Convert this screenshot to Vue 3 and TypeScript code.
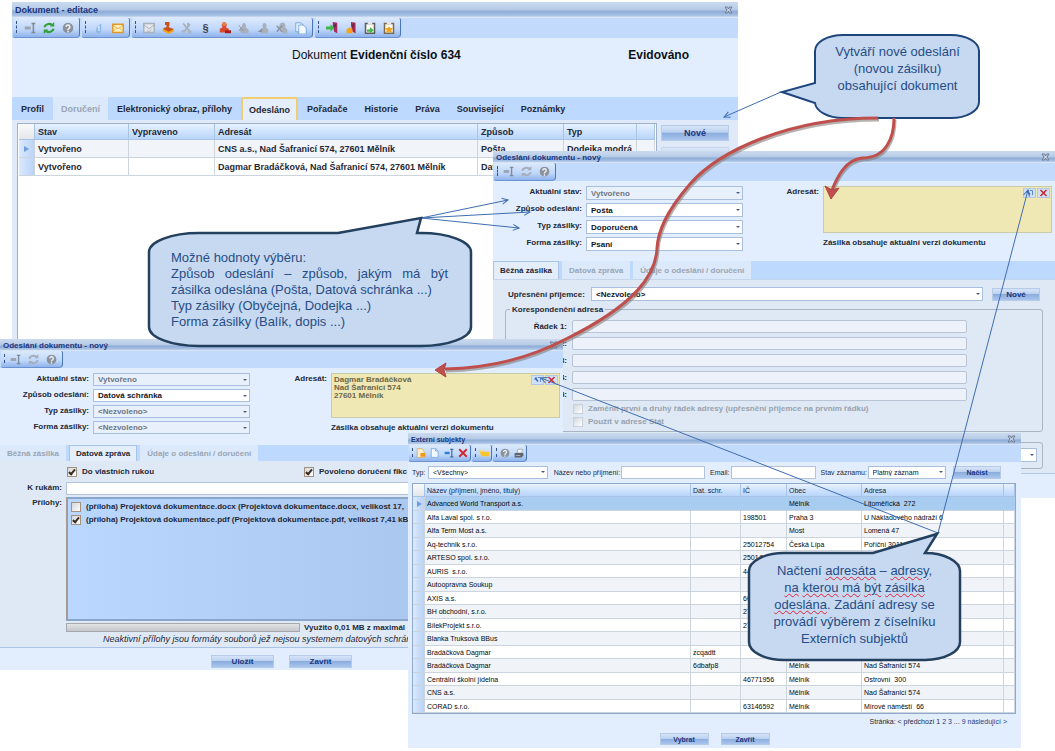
<script setup lang="ts">
interface Shape { d: string; fill?: string; stroke?: string; w?: number }
interface Subject { name: string; box: string; ic: string; city: string; street: string }

const icons: Record<string, Shape[]> = {
  rename: [
    { d: 'M1 6h8v4H1z', fill: '#9aa3ad' },
    { d: 'M10 2h5M10 14h5M12.500 2v12', stroke: '#808a96', w: 2 },
  ],
  renameBlue: [
    { d: 'M1 6h8v4H1z', fill: '#2f7fd0' },
    { d: 'M10 2h5M10 14h5M12.500 2v12', stroke: '#4a6f9e', w: 2 },
  ],
  refresh: [
    { d: 'M2 7a6 5 0 0 1 10-3', stroke: '#35a03a', w: 3 },
    { d: 'M14 9a6 5 0 0 1-10 3', stroke: '#35a03a', w: 3 },
    { d: 'M9 6h6V0zM7 10H1v6z', fill: '#35a03a' },
  ],
  refreshGray: [
    { d: 'M2 7a6 5 0 0 1 10-3', stroke: '#a5afba', w: 3 },
    { d: 'M14 9a6 5 0 0 1-10 3', stroke: '#a5afba', w: 3 },
    { d: 'M9 6h6V0zM7 10H1v6z', fill: '#a5afba' },
  ],
  help: [
    { d: 'M8 1a7 7 0 1 0 .01 0z', fill: '#8b929b' },
    { d: 'M5.500 6.500a2.500 2.500 0 1 1 3.500 2.300L8 10v1M8 12v2', stroke: '#eef3fa', w: 2 },
  ],
  drop: [{ d: 'M5 6l6-4v10q-1 3-4 3-2 0-3-2z', fill: '#8db7e8' }, { d: 'M6 7l2-1v6', stroke: '#d3e5fa', w: 2 }],
  mail: [
    { d: 'M1 3h14v11H1z', fill: '#fff0b8', stroke: '#e09a2c', w: 2 },
    { d: 'M1 4l7 5 7-5M1 13l5-5M15 13l-5-5', stroke: '#e0a040', w: 1 },
  ],
  mailGray: [
    { d: 'M1 2h14v12H1z', fill: '#e3e7ec', stroke: '#aab2bd', w: 2 },
    { d: 'M1 4l7 5 7-5M5 12a4 3 0 0 0 6-2', stroke: '#9aa3ae', w: 1 },
  ],
  stamp: [
    { d: 'M4 0h6v4L9 7l6 2v3L9 14 2 10V8l4-1V4H4z', fill: '#c8521c' },
    { d: 'M1 9l8 4 6-3v3l-6 3-8-4z', fill: '#f0a41c' },
  ],
  cutGray: [
    { d: 'M3 2l9 11M12 3L4 13', stroke: '#a4abb4', w: 2 },
    { d: 'M8 1h3v5H8zM9 11h5v4H9zM1 11h4v3H1z', fill: '#adb4bd' },
  ],
  user: [
    { d: 'M7 0a4 4 0 0 1 2 7l4 2v5H1V9l4-2A4 4 0 0 1 7 0z', fill: '#d9482c' },
    { d: 'M4 1q3-2 5 1v3H5z', fill: '#e88b50' },
    { d: 'M8 11h8v4H8z', fill: '#a81c1c' },
  ],
  userGray: [
    { d: 'M8 1a4 4 0 0 1 2 6l4 3v5H4l-2-5 4-3a4 4 0 0 1 2-6z', fill: '#a9b0b9' },
    { d: 'M1 4l6 8M1 12l5-6', stroke: '#858d97', w: 1 },
  ],
  userGray2: [
    { d: 'M10 1a4 4 0 0 1 2 6l3 3v5H6v-5l2-3a4 4 0 0 1 2-6z', fill: '#a9b0b9' },
    { d: 'M1 13l6-5v6z', fill: '#8c949e' },
  ],
  userGray3: [
    { d: 'M10 1a4 4 0 0 1 2 6l3 3v5H8v-5a4 4 0 0 1 2-9z', fill: '#a9b0b9' },
    { d: 'M1 5l7 8M8 5l-7 8', stroke: '#8c949e', w: 2 },
  ],
  page: [
    { d: 'M2 1h7l4 4v10H2z', fill: '#f3f9ff', stroke: '#5d95d3', w: 1 },
    { d: 'M9 1v4h4', stroke: '#5d95d3', w: 1 },
  ],
  pages: [
    { d: 'M1 1h7l3 3v9H1z', fill: '#e6f1fd', stroke: '#5d95d3', w: 1 },
    { d: 'M5 4h6l4 4v8H5z', fill: '#f3f9ff', stroke: '#5d95d3', w: 1 },
  ],
  binderIn: [
    { d: 'M9 0l6 1v14l-4-2-2-8z', fill: '#a52a62' },
    { d: 'M11 3h2v4h-2z', fill: '#3b3b48' },
    { d: 'M0 6h6V3l5 5-5 5v-3H0z', fill: '#3fb54a' },
  ],
  binderOut: [
    { d: 'M8 0l6 1v14l-4-2-2-8z', fill: '#a52a50' },
    { d: 'M10 3h2v4h-2z', fill: '#3b3b48' },
    { d: 'M2 10l4-3 4 3v5H2z', fill: '#f5a21d' },
  ],
  clipGreen: [
    { d: 'M2 2h12v13H2z', fill: '#fdfdf4', stroke: '#5c5c5c', w: 2 },
    { d: 'M5 0h6v3H5z', fill: '#e6e6e6' },
    { d: 'M4 10h4V7l5 4-5 4v-2H4z', fill: '#43b649' },
  ],
  clipOrange: [
    { d: 'M2 2h12v13H2z', fill: '#fdfdf4', stroke: '#7a6a4c', w: 2 },
    { d: 'M5 0h6v3H5z', fill: '#e6e6e6' },
    { d: 'M8 6l2 2h3l-2 3 1 3-4-1-4 1 1-3-2-3h3z', fill: '#f5a21d' },
  ],
  newPage: [
    { d: 'M2 1h7l4 4v10H2z', fill: '#fdf2cf', stroke: '#d79a35', w: 1 },
    { d: 'M7 8h8v6H7z', fill: '#f09a1c' },
  ],
  cross: [{ d: 'M2 2l12 12M14 2L2 14', stroke: '#d1262b', w: 3 }],
  folder: [{ d: 'M0 4h6l2 2h8v7H4z', fill: '#f7c52b' }, { d: 'M2 5h4', stroke: '#fbe28a', w: 2 }],
  printer: [
    { d: 'M6 2h8l-2 6H5z', fill: '#f4f6f8', stroke: '#8a929c', w: 1 },
    { d: 'M1 8h14v4l-3 3H1z', fill: '#5c6570' },
    { d: 'M3 12h7', stroke: '#d6dbe1', w: 1 },
  ],
  pick: [{ d: 'M3 3h5l-2 2 4 5-2 2-4-5-2 1z', fill: '#2b62b8' }, { d: 'M9 3h5v9', stroke: '#5c8bd0', w: 2 }],
  close: [{ d: 'M1 2h5l2 4 2-4h5l-4 6 4 6h-5l-2-4-2 4H1l4-6z', fill: '#c9d4e4', stroke: '#6a7a92', w: 2 }],
}

const mainTools = [
  ['rename', 'refresh', 'help'],
  ['drop', 'mail'],
  ['mailGray', 'stamp', 'cutGray', 'section', 'user', 'userGray', 'userGray2', 'userGray3', 'pages'],
  ['binderIn', 'binderOut', 'clipGreen', 'clipOrange'],
]
const smallTools = ['rename', 'refreshGray', 'help']
const subjectTools = [['newPage', 'page', 'renameBlue', 'cross'], ['folder'], ['help', 'printer']]

const mainTabs = ['Profil', 'Doručení', 'Elektronický obraz, přílohy', 'Odesláno', 'Pořadače', 'Historie', 'Práva', 'Související', 'Poznámky']
const sendTabs = ['Běžná zásilka', 'Datová zpráva', 'Údaje o odeslání / doručení']

const postFields = [
  { label: 'Aktuální stav:', value: 'Vytvořeno', off: true },
  { label: 'Způsob odeslání:', value: 'Pošta', off: false },
  { label: 'Typ zásilky:', value: 'Doporučená', off: false },
  { label: 'Forma zásilky:', value: 'Psaní', off: false },
]
const boxFields = [
  { label: 'Aktuální stav:', value: 'Vytvořeno', off: true },
  { label: 'Způsob odeslání:', value: 'Datová schránka', off: false },
  { label: 'Typ zásilky:', value: '<Nezvoleno>', off: true },
  { label: 'Forma zásilky:', value: '<Nezvoleno>', off: true },
]

const s = (name: string, box = '', ic = '', city = '', street = ''): Subject => ({ name, box, ic, city, street })
const subjects: Subject[] = [
  s('Advanced World Transport a.s.', '', '', 'Mělník', 'Litoměřická  272'),
  s('Alfa Laval spol. s r.o.', '', '198501', 'Praha 3', 'U Nákladového nádraží 6'),
  s('Alfa Term Most a.s.', '', '', 'Most', 'Lomená 47'),
  s('Aq-technik s.r.o.', '', '25012754', 'Česká Lípa', 'Poříční 3011'),
  s('ARTESO spol. s.r.o.', '', '25014'),
  s('AURIS  s.r.o.', '', '44'),
  s('Autoopravna Soukup'),
  s('AXIS a.s.', '', '60'),
  s('BH obchodní, s.r.o.', '', '27'),
  s('BílekProjekt s.r.o.', '', '27'),
  s('Blanka Truksová BBus'),
  s('Bradáčková Dagmar', 'zcqadtt'),
  s('Bradáčková Dagmar', '6dbafp8', '', 'Mělník', 'Nad Šafranicí 574'),
  s('Centrální školní jídelna', '', '46771956', 'Mělník', 'Ostrovní  300'),
  s('CNS a.s.', '', '', 'Mělník', 'Nad Šafranicí 574'),
  s('CORAD s.r.o.', '', '63146592', 'Mělník', 'Mírové náměstí  66'),
]
</script>

<template>
  <main class="canvas">
    <section class="win doc">
      <header class="title"><span>Dokument - editace</span>
        <button class="close" aria-label="Zavřít okno"><svg viewBox="0 0 16 16"><path v-for="(p, i) in icons.close" :key="i" :d="p.d" :fill="p.fill ?? 'none'" :stroke="p.stroke" :stroke-width="p.w" /></svg></button>
      </header>
      <div class="toolbar">
        <div v-for="(g, gi) in mainTools" :key="gi" class="group">
          <button v-for="n in g" :key="n" class="tool" :aria-label="n">
            <span v-if="n === 'section'" class="para">§</span>
            <svg v-else viewBox="0 0 16 16"><path v-for="(p, i) in icons[n]" :key="i" :d="p.d" :fill="p.fill ?? 'none'" :stroke="p.stroke" :stroke-width="p.w" /></svg>
          </button>
        </div>
      </div>
      <div class="heading">
        <p>Dokument <b>Evidenční číslo 634</b></p>
        <b class="state">Evidováno</b>
      </div>
      <nav class="tabs">
        <button v-for="t in mainTabs" :key="t" :class="{ active: t === 'Odesláno', off: t === 'Doručení' }">{{ t }}</button>
      </nav>
      <div class="doc-body">
        <div class="sheet">
          <table class="sent">
            <colgroup><col class="w-mark"><col class="w-stav"><col class="w-vypr"><col><col class="w-zpus"><col class="w-typ"><col class="w-end"></colgroup>
            <thead><tr><th></th><th>Stav</th><th>Vypraveno</th><th>Adresát</th><th>Způsob</th><th>Typ</th><th></th></tr></thead>
            <tbody>
              <tr><td><i class="mark"></i></td><td>Vytvořeno</td><td></td><td>CNS a.s., Nad Šafranicí 574, 27601 Mělník</td><td>Pošta</td><td>Dodejka modrá</td><td></td></tr>
              <tr><td></td><td>Vytvořeno</td><td></td><td>Dagmar Bradáčková, Nad Šafranicí 574, 27601 Mělník</td><td>Datová schránka</td><td></td><td></td></tr>
            </tbody>
          </table>
        </div>
        <div class="side">
          <button class="btn">Nové</button>
          <button class="btn pale">Editovat</button>
        </div>
      </div>
    </section>

    <section class="win small post">
      <header class="title"><span>Odeslání dokumentu - nový</span>
        <button class="close" aria-label="Zavřít okno"><svg viewBox="0 0 16 16"><path v-for="(p, i) in icons.close" :key="i" :d="p.d" :fill="p.fill ?? 'none'" :stroke="p.stroke" :stroke-width="p.w" /></svg></button>
      </header>
      <div class="toolbar"><div class="group">
        <button v-for="n in smallTools" :key="n" class="tool" :aria-label="n"><svg viewBox="0 0 16 16"><path v-for="(p, i) in icons[n]" :key="i" :d="p.d" :fill="p.fill ?? 'none'" :stroke="p.stroke" :stroke-width="p.w" /></svg></button>
      </div></div>
      <div class="form">
        <div class="pairs">
          <template v-for="(f, i) in postFields" :key="f.label">
            <label :for="'post' + i">{{ f.label }}</label>
            <span class="pick"><select :id="'post' + i" :disabled="f.off"><option>{{ f.value }}</option></select></span>
          </template>
        </div>
        <label class="addr-label" for="post-addr">Adresát:</label>
        <div class="addr">
          <div class="note">
            <textarea id="post-addr"></textarea>
            <div class="note-tools">
              <button aria-label="Vybrat"><svg viewBox="0 0 16 16"><path v-for="(p, i) in icons.pick" :key="i" :d="p.d" :fill="p.fill ?? 'none'" :stroke="p.stroke" :stroke-width="p.w" /></svg></button>
              <button aria-label="Smazat"><svg viewBox="0 0 16 16"><path v-for="(p, i) in icons.cross" :key="i" :d="p.d" :stroke="p.stroke" :stroke-width="p.w" /></svg></button>
            </div>
          </div>
          <p>Zásilka obsahuje aktuální verzi dokumentu</p>
        </div>
      </div>
      <nav class="tabs">
        <button v-for="(t, i) in sendTabs" :key="t" :class="i === 0 ? 'active' : 'off'">{{ t }}</button>
      </nav>
      <div class="post-body">
        <div class="recipient">
          <label for="rec">Upřesnění příjemce:</label>
          <span class="pick"><select id="rec"><option>&lt;Nezvoleno&gt;</option></select></span>
          <button class="btn">Nové</button>
        </div>
        <fieldset>
          <legend>Korespondenční adresa</legend>
          <div class="lines">
            <template v-for="n in 5" :key="n">
              <label :for="'line' + n">Řádek {{ n }}:</label><input :id="'line' + n" type="text" disabled>
            </template>
          </div>
          <label class="check"><input type="checkbox" disabled>Zaměnit první a druhý řádek adresy (upřesnění příjemce na prvním řádku)</label>
          <label class="check"><input type="checkbox" disabled>Použít v adrese Stát</label>
        </fieldset>
        <fieldset class="second">
          <span class="pick"><select aria-label="Druh"><option></option></select></span>
        </fieldset>
      </div>
    </section>

    <section class="win small databox">
      <header class="title"><span>Odeslání dokumentu - nový</span>
        <button class="close" aria-label="Zavřít okno"><svg viewBox="0 0 16 16"><path v-for="(p, i) in icons.close" :key="i" :d="p.d" :fill="p.fill ?? 'none'" :stroke="p.stroke" :stroke-width="p.w" /></svg></button>
      </header>
      <div class="toolbar"><div class="group">
        <button v-for="n in smallTools" :key="n" class="tool" :aria-label="n"><svg viewBox="0 0 16 16"><path v-for="(p, i) in icons[n]" :key="i" :d="p.d" :fill="p.fill ?? 'none'" :stroke="p.stroke" :stroke-width="p.w" /></svg></button>
      </div></div>
      <div class="form">
        <div class="pairs">
          <template v-for="(f, i) in boxFields" :key="f.label">
            <label :for="'box' + i">{{ f.label }}</label>
            <span class="pick"><select :id="'box' + i" :disabled="f.off"><option>{{ f.value }}</option></select></span>
          </template>
        </div>
        <label class="addr-label" for="box-addr">Adresát:</label>
        <div class="addr">
          <div class="note">
            <textarea id="box-addr">Dagmar Bradáčková
Nad Šafranicí 574
27601 Mělník</textarea>
            <div class="note-tools">
              <button aria-label="Vybrat"><svg viewBox="0 0 16 16"><path v-for="(p, i) in icons.pick" :key="i" :d="p.d" :fill="p.fill ?? 'none'" :stroke="p.stroke" :stroke-width="p.w" /></svg></button>
              <button aria-label="Smazat"><svg viewBox="0 0 16 16"><path v-for="(p, i) in icons.cross" :key="i" :d="p.d" :stroke="p.stroke" :stroke-width="p.w" /></svg></button>
            </div>
          </div>
          <p>Zásilka obsahuje aktuální verzi dokumentu</p>
        </div>
      </div>
      <nav class="tabs">
        <button v-for="(t, i) in sendTabs" :key="t" :class="i === 1 ? 'active' : 'off'">{{ t }}</button>
      </nav>
      <div class="box-body">
        <div class="checks">
          <label class="check"><input type="checkbox" checked>Do vlastních rukou</label>
          <label class="check"><input type="checkbox" checked>Povoleno doručení fikc</label>
        </div>
        <div class="row">
          <label for="hands">K rukám:</label><input id="hands" type="text">
        </div>
        <div class="row">
          <span class="row-label">Přílohy:</span>
          <div class="files">
            <label class="check"><input type="checkbox">(příloha) Projektová dokumentace.docx (Projektová dokumentace.docx, velikost 17,</label>
            <label class="check"><input type="checkbox" checked>(příloha) Projektová dokumentace.pdf (Projektová dokumentace.pdf, velikost 7,41 kB</label>
          </div>
        </div>
        <div class="usage"><div class="bar"></div><span>Využito 0,01 MB z maximál</span></div>
        <p class="hint">Neaktivní přílohy jsou formáty souborů jež nejsou systemem datových schránek</p>
      </div>
      <footer><button class="btn">Uložit</button><button class="btn">Zavřít</button></footer>
    </section>

    <section class="win subjects">
      <header class="title"><span>Externí subjekty</span>
        <button class="close" aria-label="Zavřít okno"><svg viewBox="0 0 16 16"><path v-for="(p, i) in icons.close" :key="i" :d="p.d" :fill="p.fill ?? 'none'" :stroke="p.stroke" :stroke-width="p.w" /></svg></button>
      </header>
      <div class="toolbar">
        <div v-for="(g, gi) in subjectTools" :key="gi" class="group">
          <button v-for="n in g" :key="n" class="tool" :aria-label="n"><svg viewBox="0 0 16 16"><path v-for="(p, i) in icons[n]" :key="i" :d="p.d" :fill="p.fill ?? 'none'" :stroke="p.stroke" :stroke-width="p.w" /></svg></button>
        </div>
      </div>
      <form class="filter" @submit.prevent>
        <label for="f-type">Typ:</label>
        <span class="pick wide"><select id="f-type"><option>&lt;Všechny&gt;</option></select></span>
        <label for="f-name" class="l-name">Název nebo příjmení:</label><input id="f-name" type="text">
        <label for="f-mail" class="l-mail">Email:</label><input id="f-mail" type="text">
        <label for="f-state" class="l-state">Stav záznamu:</label>
        <span class="pick"><select id="f-state"><option>Platný záznam</option></select></span>
        <button class="btn">Načíst</button>
      </form>
      <table class="list">
        <colgroup><col class="c-mark"><col><col class="c-box"><col class="c-ic"><col class="c-city"><col class="c-street"><col class="c-end"></colgroup>
        <thead><tr><th></th><th>Název (příjmení, jméno, tituly)</th><th>Dat. schr.</th><th>IČ</th><th>Obec</th><th>Adresa</th><th></th></tr></thead>
        <tbody>
          <tr v-for="(r, i) in subjects" :key="i" :class="{ sel: i === 0 }">
            <td><i v-if="i === 0" class="mark"></i></td><td>{{ r.name }}</td><td>{{ r.box }}</td><td>{{ r.ic }}</td><td>{{ r.city }}</td><td>{{ r.street }}</td><td></td>
          </tr>
        </tbody>
      </table>
      <p class="pager">Stránka: &lt; předchozí 1 <a href="#2">2</a> <a href="#3">3</a> ... <a href="#9">9</a> <a href="#next">následující &gt;</a></p>
      <footer><button class="btn">Vybrat</button><button class="btn">Zavřít</button></footer>
    </section>

    <svg class="overlay" viewBox="0 0 1055 751" aria-hidden="true">
      <defs>
        <marker id="open" viewBox="0 0 8 8" refX="7" refY="4" markerWidth="8" markerHeight="8" orient="auto" markerUnits="userSpaceOnUse">
          <path d="M1 1l6 3-6 3" fill="none" stroke="#3f6db0" />
        </marker>
      </defs>
      <g fill="none" stroke="#3f6db0" stroke-width="1">
        <path d="M781 92L724 117" marker-end="url(#open)" />
        <path d="M421 218L508 200" marker-end="url(#open)" />
        <path d="M421 218L530 212" marker-end="url(#open)" />
        <path d="M421 218L519 228" marker-end="url(#open)" />
        <path d="M938 533L1028 190" marker-end="url(#open)" />
        <path d="M938 533L541 378" marker-end="url(#open)" />
      </g>
      <g fill="#c6d9f1" stroke-linejoin="miter">
        <path stroke="#1f467c" stroke-width="2" d="M843 35H951A28 16 0 0 1 979 51V102A28 16 0 0 1 951 118H843A28 16 0 0 1 815 103L782 92 815 83V51A28 16 0 0 1 843 35Z" />
        <path stroke="#24405f" stroke-width="2.500" d="M199 233H338L421 218 417 233H421A50 19 0 0 1 471 252V327A50 19 0 0 1 421 346H199A50 19 0 0 1 149 327V252A50 19 0 0 1 199 233Z" />
        <path stroke="#24405f" stroke-width="2.500" d="M784 553H873L937 534 925 553A35 18 0 0 1 960 571V642A35 18 0 0 1 925 660H784A35 18 0 0 1 749 642V571A35 18 0 0 1 784 553Z" />
      </g>
      <g fill="none" stroke="#857f7c" stroke-width="3" opacity="0.6">
        <path d="M879 120C791 120 721 152 691 186C666 215 659 234 658 250C657 277 636 307 567 341C531 360 491 370 446 371" />
        <path d="M895 120C895 140 887 160 863 160C847 162 839 177 833 191" />
      </g>
      <g fill="none" stroke="#bf4f4c" stroke-width="3">
        <path d="M878 118C790 118 720 150 690 184C665 213 658 232 657 248C656 275 635 305 566 339C530 358 490 368 445 369" />
        <path d="M894 118C894 138 886 158 862 158C846 160 838 175 832 190" />
      </g>
      <path d="M435 370L446 363 444 370 446 377Z" fill="#c0504d" stroke="#b04441" />
      <path d="M831 199L825 186 832 190 839 188Z" fill="#c0504d" stroke="#b04441" />
    </svg>

    <p class="bubble create">Vytváří nové odeslání<br>(novou zásilku)<br>obsahující dokument</p>
    <div class="bubble values">
      <p>Možné hodnoty výběru:</p>
      <p>Způsob odeslání – způsob, jakým má být zásilka odeslána (Pošta, Datová schránka ...)</p>
      <p>Typ zásilky (Obyčejná, Dodejka ...)</p>
      <p>Forma zásilky (Balík, dopis ...)</p>
    </div>
    <p class="bubble load">Načtení <u>adresáta</u> – <u>adresy</u>,<br><u>na</u> <u>kterou</u> <u>má</u> <u>být</u> <u>zásilka</u><br><u>odeslána</u>. Zadání adresy se<br>provádí výběrem z číselníku<br>Externích subjektů</p>
  </main>
</template>

<style>
body { margin: 0; background: #fff; }
</style>

<style scoped>
.canvas { position: relative; min-height: 100vh; overflow: hidden; font-family: "Liberation Sans", Arial, sans-serif; color: #1f2836; }
.canvas *, .canvas *::before, .canvas *::after { box-sizing: border-box; }
p { margin: 0; }
button, input, select, textarea { font: inherit; color: inherit; margin: 0; }
button { padding: 0; border: 0; background: none; white-space: nowrap; }
svg { display: block; }

.win { position: absolute; overflow: hidden; background: #e2eefe; white-space: nowrap; display: flex; flex-direction: column; }
.doc { left: 12px; top: 2px; width: 726px; height: 400px; font-size: 9px; font-weight: bold; }
.post { left: 493px; top: 151px; width: 562px; height: 347px; }
.databox { left: 0; top: 339px; width: 563px; height: 331px; }
.subjects { left: 408px; top: 433px; width: 613px; height: 315px; font-size: 7px; }
.small { font-size: 8px; font-weight: bold; }

.title { display: flex; align-items: center; justify-content: space-between; height: 16px; padding: 0 5px 0 3px; font-weight: bold; color: #1c3680; background: linear-gradient(#cbdaee, #b9cde8 45%, #8fadd6 60%, #a9c2e6 85%, #e9f1fc); }
.small .title, .subjects .title { height: 12px; }
.close svg { width: 9px; height: 8px; }

.toolbar { display: flex; gap: 2px; height: 20px; padding-left: 1px; background: #c2dafb; }
.group { position: relative; display: flex; align-items: center; padding: 0 2px 0 7px; border-right: 1px solid #4a74bb; border-bottom: 1px solid #6b93d2; border-radius: 2px 2px 4px 2px; background: linear-gradient(#dbe9fc, #bfd7fa 60%, #8fb3ec); }
.group::before { content: ""; position: absolute; left: 3px; top: 3px; bottom: 4px; border-left: 1px dashed #33538f; }
.tool { display: flex; align-items: center; justify-content: center; width: 19px; }
.tool svg { width: 12px; height: 12px; }
.para { font-size: 11px; color: #3a4351; }
.small .toolbar { height: 18px; }
.small .tool { width: 18px; }
.small .group { padding-left: 5px; }
.small .tool svg { width: 11px; height: 11px; }
.subjects .toolbar { height: 17px; gap: 1px; }
.subjects .group { padding: 0 0 0 5px; }
.subjects .tool { width: 14px; }
.subjects .tool svg { width: 10px; height: 10px; }

.heading { display: flex; justify-content: space-between; height: 59px; padding: 9px 49px 0 280px; font-size: 12px; line-height: 16px; font-weight: normal; color: #0d1118; }

.tabs { display: flex; gap: 2px; flex: none; height: 23px; background: #bdd9fe; }
.tabs button { padding: 0 8px; font-weight: bold; border: 1px solid transparent; }
.tabs .off { color: #9aa5b3; background: #dbe9fb; }
.tabs .active { background: #e4eefb; }
.doc .tabs { gap: 1px; padding-left: 1px; }
.doc .tabs button { padding: 0 7px; }
.doc .tabs .active { border: 2px solid #f0cd74; border-bottom: 0; border-radius: 3px 3px 0 0; padding: 0 6px; }
.small .tabs { height: 18px; gap: 3px; }
.small .tabs button { padding: 0 6px; }
.small .tabs .active { border-color: #a9c3e6; border-bottom: 0; }

.doc-body { display: flex; flex: 1; padding: 3px 9px 0 5px; background: #dfe9f7; }
.sheet { flex: 1; border: 1px solid #9fb1c9; background: #fff; padding: 0 1px; }
.side { display: flex; flex-direction: column; gap: 6px; width: 72px; padding: 2px 0 0 4px; }
.btn { height: 13px; border: 1px solid #b6cbe8; color: #1c3680; font-weight: bold; background: linear-gradient(#d6e4f8, #bcd1f0 45%, #8badde 50%, #a9c5ee); }
.doc .btn { height: 16px; }
.btn.pale { opacity: 0.6; }

table { width: 100%; table-layout: fixed; border-collapse: separate; border-spacing: 0; }
th, td { padding: 0 3px; text-align: left; overflow: hidden; white-space: pre; border-right: 1px solid #ccd4de; border-bottom: 1px solid #ccd4de; }
th { background: linear-gradient(#e9f3ff, #cfe3fd 50%, #b8d5fb); border-color: #a9c3e6; }
th:first-child { background: linear-gradient(#fafafa, #e3e6ea); }
td { background: #fff; }
td:first-child { background: linear-gradient(90deg, #dbe9fc, #b9d3f8); }
.sent th { height: 16px; font-weight: bold; }
.sent td { height: 18px; }
.sent tr:nth-child(odd) td:not(:first-child) { background: #f1f4f9; }
.w-mark { width: 16px; } .w-stav { width: 94px; } .w-vypr { width: 86px; } .w-zpus { width: 86px; } .w-typ { width: 73px; } .w-end { width: 18px; }
.mark { display: block; width: 0; border: 3px solid transparent; border-left: 5px solid #6f9ddd; border-right: 0; margin-left: 2px; }

.form { display: flex; gap: 4px; flex: none; height: 80px; padding: 5px 3px 0 0; }
.pairs { display: grid; grid-template-columns: 89px 157px; column-gap: 4px; row-gap: 3px; align-content: start; text-align: right; }
.pairs label { line-height: 12px; }
.pick { position: relative; display: block; min-width: 0; }
.pick::after { content: ""; position: absolute; right: 3px; top: 50%; margin-top: -1px; border: 2px solid transparent; border-top-color: #4a5f80; border-bottom: 0; pointer-events: none; }
select { display: block; appearance: none; width: 100%; height: 14px; padding: 0 4px; border: 1px solid #a9bfdd; border-radius: 0; background: #fff; color: #10151e; }
select:disabled { opacity: 1; color: #6d7682; background: #e8f0fb; }
.addr-label { flex: 1; text-align: right; line-height: 12px; }
.addr { width: 229px; }
.note { position: relative; height: 47px; border: 1px solid #c8cda8; background: #f0e8b4; }
.note textarea { display: block; width: 100%; height: 100%; padding: 2px; border: 0; resize: none; overflow: hidden; line-height: 8px; background: none; color: #6c6748; }
.note-tools { position: absolute; top: 1px; right: 1px; display: flex; gap: 1px; }
.note-tools button { width: 13px; height: 10px; border: 1px solid #b4c8e6; background: #cfe0f8; display: flex; align-items: center; justify-content: center; }
.note-tools svg { width: 9px; height: 8px; }
.addr p { margin-top: 4px; line-height: 12px; }

.post-body { height: 195px; padding: 7px 12px 0; background: #dfe9f5; border-top: 1px solid #c6d6ea; border-bottom: 1px solid #b4cbe8; }
.recipient { display: grid; grid-template-columns: 82px 1fr 48px; align-items: center; padding: 0 3px; }
.recipient .pick { margin: 0 9px 0 1px; }
fieldset { margin: 3px 0 0; padding: 0 75px 0 0; height: 128px; border: 1px solid #aab4c2; border-radius: 3px; min-width: 0; }
legend { margin-left: 4px; padding: 0 2px; line-height: 11px; }
.lines { display: grid; grid-template-columns: 61px 1fr; column-gap: 5px; row-gap: 4px; text-align: right; padding: 5px 0 1px; }
.lines label { line-height: 13px; }
input[type="text"] { min-width: 0; height: 13px; border: 1px solid #b3c4da; background: #fff; }
input[type="text"]:disabled { background: #edf2fa; border-color: #b9c5d6; border-radius: 2px; }
.check { display: flex; align-items: center; gap: 5px; height: 13px; }
fieldset .check { margin-left: 67px; color: #98a2ae; }
input[type="checkbox"] { appearance: none; width: 10px; height: 10px; border: 1px solid #a3927e; background: linear-gradient(135deg, #d4d6da, #fff); }
input[type="checkbox"]:disabled { border-color: #c9d0d9; }
input[type="checkbox"]:checked::after { content: ""; display: block; width: 4px; height: 7px; margin-left: 2px; border: solid #3a2c22; border-width: 0 2px 2px 0; transform: rotate(40deg); }
fieldset.second { height: 27px; margin-top: 10px; padding: 5px 5px; }

.databox .toolbar { height: 17px; }
.databox .form { height: 77px; }
.databox select { height: 13px; }
.databox .note { height: 45px; }
.databox .tabs { height: 16px; }
.box-body { height: 187px; padding: 4px 0 0; background: #dfe9f5; border-bottom: 1px solid #a9c3e6; }
.checks { display: grid; grid-template-columns: 237px 1fr; padding-left: 67px; height: 17px; }
.row { display: grid; grid-template-columns: 62px 1fr; column-gap: 4px; text-align: right; margin-bottom: 2px; line-height: 12px; }
.files { height: 124px; padding: 1px 3px; border: 2px solid #8ba6cd; border-left-color: #a59a96; background: linear-gradient(90deg, #b9d7ff, #a9c6ee 75%); }
.usage { display: flex; gap: 4px; align-items: center; padding-left: 66px; height: 9px; }
.bar { width: 234px; height: 9px; border: 1px solid #a5a9ae; background: linear-gradient(#e2e3e5, #c3c6ca); }
.hint { padding-left: 103px; font-size: 9px; font-style: italic; font-weight: normal; line-height: 15px; }
footer { display: flex; }
.databox footer { gap: 15px; padding: 7px 0 0 211px; }
.databox footer .btn { width: 63px; }

.filter { display: flex; align-items: center; height: 20px; padding: 0 20px 0 4px; }
.filter label { width: 16px; }
.filter .l-name { width: 73px; padding-left: 6px; }
.filter .l-mail { width: 26px; padding-left: 5px; }
.filter .l-state { width: 52px; padding-left: 5px; }
.filter input, .filter .pick { flex: 80 1 0; }
.filter .wide { flex-grow: 122; }
.filter select, .filter input { height: 13px; }
.filter .btn { width: 48px; margin-left: 7px; }
.list { width: auto; flex: none; margin: 1px 5px 0 4px; border: 1px solid #8fa9cc; }
.list th, .list td { padding: 0 2px; line-height: 9px; }
.list th { height: 13px; font-weight: normal; color: #15233f; }
.list td { height: 14px; color: #05080d; }
.list tbody tr:nth-child(even) td { height: 13px; }
.list tbody tr:nth-child(odd) td:not(:first-child) { background: #f0f3f8; }
.list tbody tr.sel td:not(:first-child) { background: #a9cdf0; border-right-color: #a9cdf0; }
.c-mark { width: 12px; } .c-box { width: 50px; } .c-ic { width: 46px; } .c-city { width: 75px; } .c-street { width: 142px; } .c-end { width: 11px; }
.pager { padding: 3px 14px 0 0; text-align: right; line-height: 9px; }
.pager a { color: #1d3f8c; text-decoration: none; }
.subjects footer { gap: 12px; justify-content: center; padding-top: 7px; }
.subjects footer .btn { width: 49px; height: 12px; }

.overlay { position: absolute; left: 0; top: 0; width: 1055px; height: 751px; pointer-events: none; }
.bubble { position: absolute; color: #274d86; font-size: 13px; }
.create { left: 815px; top: 43px; width: 165px; text-align: center; line-height: 17px; }
.values { left: 171px; top: 250px; width: 277px; line-height: 16px; text-align: justify; }
.load { left: 749px; top: 562px; width: 211px; text-align: center; line-height: 17px; }
.load u { text-decoration: underline wavy #e0263a 1px; text-underline-offset: 1px; }
</style>
